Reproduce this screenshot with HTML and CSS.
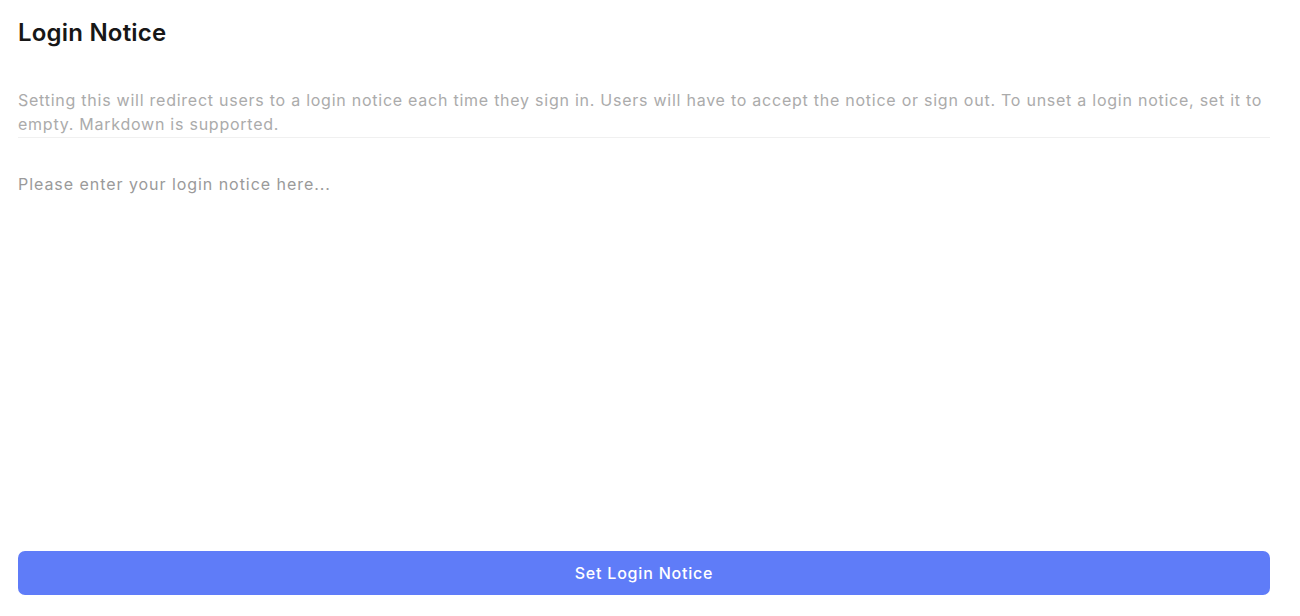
FILE: index.html
```html
<!DOCTYPE html>
<html lang="en">
<head>
<meta charset="utf-8">
<title>Login Notice</title>
<link rel="stylesheet" href="styles.css">
</head>
<body>
<main class="page">
  <h1 class="title">Login Notice</h1>
  <p class="desc">Setting this will redirect users to a login notice each time they sign in. Users will have to accept the notice or sign out. To unset a login notice, set it to empty. Markdown is supported.</p>
  <textarea class="editor" placeholder="Please enter your login notice here..." autofocus></textarea>
  <button class="submit" type="button">Set Login Notice</button>
</main>
</body>
</html>
```

FILE: styles.css
```css
html, body {
  margin: 0;
  padding: 0;
  background: #ffffff;
}
body {
  font-family: Inter, "Liberation Sans", sans-serif;
  color: #1a1a1a;
}
.page {
  box-sizing: border-box;
  height: 616px;
  padding: 16px 30px 21px 18px;
  display: flex;
  flex-direction: column;
}
.title {
  margin: 0;
  font-size: 24px;
  line-height: 34px;
  font-weight: 600;
  letter-spacing: 0.2px;
  color: #171717;
}
.desc {
  margin: 38px 0 0;
  padding-bottom: 1px;
  border-bottom: 1px solid #f0f0f0;
  font-size: 16px;
  line-height: 24px;
  color: #ababab;
  letter-spacing: 0.75px;
}
.editor {
  flex: 1;
  margin: 34px 0 0;
  padding: 0;
  border: none;
  outline: none;
  resize: none;
  font-family: inherit;
  font-size: 16px;
  line-height: 24px;
  color: #333;
  background: transparent;
  letter-spacing: 0.95px;
  caret-color: #333;
}
.editor::placeholder {
  color: #9a9a9a;
}
.submit {
  margin-top: 12px;
  height: 44px;
  border: none;
  border-radius: 7px;
  background: #5f7cf8;
  color: #ffffff;
  font-family: inherit;
  font-size: 16px;
  font-weight: 500;
  letter-spacing: 0.8px;
  cursor: pointer;
}
```
